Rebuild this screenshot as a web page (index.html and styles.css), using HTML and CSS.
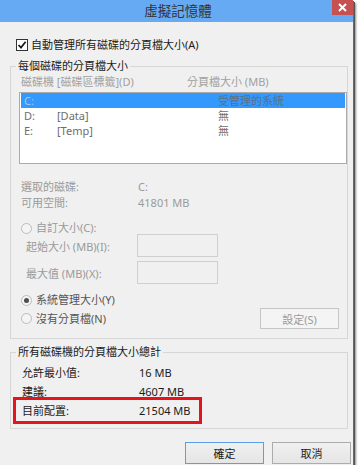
FILE: index.html
```html
<!DOCTYPE html>
<html lang="zh-Hant">
<head>
<meta charset="utf-8">
<title>虛擬記憶體</title>
<link rel="stylesheet" href="styles.css">
</head>
<body>
<div class="window">
  <div class="titlebar">
    <span class="spacer"></span>
    <span class="title">虛擬記憶體</span>
    <span class="close"><svg width="9" height="9" viewBox="0 0 9 9"><path d="M1 1 L8 8 M8 1 L1 8" stroke="#fff" stroke-width="2" fill="none"/></svg></span>
  </div>
  <div class="content">
    <div class="auto"><span class="checkbox"><svg width="10" height="10" viewBox="0 0 10 10"><path d="M1.5 5 L4 7.6 L8.6 1.8" stroke="#1a1a1a" stroke-width="1.7" fill="none"/></svg></span><span>自動管理所有磁碟的分頁檔大小(A)</span></div>

    <fieldset class="group g1">
      <legend>每個磁碟的分頁檔大小</legend>
      <div class="cols"><span>磁碟機 [磁碟區標籤](D)</span><span>分頁檔大小 (MB)</span></div>
      <div class="listbox">
        <div class="lrow selected"><span class="dl">C:</span><span></span><span>受管理的系統</span></div>
        <div class="lrow"><span>D:</span><span>[Data]</span><span>無</span></div>
        <div class="lrow"><span>E:</span><span>[Temp]</span><span>無</span></div>
      </div>
      <div class="info">
        <span>選取的磁碟:</span><span>C:</span>
        <span>可用空間:</span><span>41801 MB</span>
      </div>
      <div class="radio-row custom"><span class="radio"></span><span>自訂大小(C):</span></div>
      <div class="field-row"><span class="flabel">起始大小 (MB)(I):</span><span class="tbox"></span></div>
      <div class="field-row second"><span class="flabel">最大值 (MB)(X):</span><span class="tbox"></span></div>
      <div class="radio-row sys"><span class="radio checked"></span><span>系統管理大小(Y)</span></div>
      <div class="last-row">
        <div class="radio-row none"><span class="radio"></span><span>沒有分頁檔(N)</span></div>
        <span class="btn disabled">設定(S)</span>
      </div>
    </fieldset>

    <fieldset class="group g2">
      <legend>所有磁碟機的分頁檔大小總計</legend>
      <div class="trow"><span>允許最小值:</span><span>16 MB</span></div>
      <div class="trow"><span>建議:</span><span>4607 MB</span></div>
      <div class="trow current"><span>目前配置:</span><span>21504 MB</span></div>
    </fieldset>

    <div class="actions">
      <span class="btn default">確定</span>
      <span class="btn">取消</span>
    </div>
  </div>
</div>
</body>
</html>
```

FILE: styles.css
```css
body {
  margin: 0;
  background: #ffffff;
  font-family: "Noto Sans", "Noto Sans CJK TC", sans-serif;
  font-size: 11px;
  color: #1a1a1a;
}

.window {
  width: 353px;
  height: 465px;
  background: #f0f0f0;
  box-shadow: 1px 1px 0 #6a6a6a, 2px 2px 0 #555, 3px 3px 2px rgba(0, 0, 0, 0.45);
  display: flex;
  flex-direction: column;
}

.titlebar {
  height: 22px;
  background: #66aaf3;
  display: grid;
  grid-template-columns: 1fr auto 1fr;
}

.title {
  font-size: 13.5px;
  line-height: 22px;
  color: #333;
  padding-left: 3px;
}

.close {
  justify-self: end;
  width: 21px;
  height: 15px;
  background: #c75050;
  display: flex;
  align-items: center;
  justify-content: center;
}

.content {
  padding: 17px 5px 0 10px;
  display: flex;
  flex-direction: column;
}

.auto {
  display: flex;
  align-items: center;
  height: 12px;
  gap: 3px;
  margin-left: 6px;
  line-height: 12px;
}

.checkbox {
  width: 12px;
  height: 12px;
  box-sizing: border-box;
  border: 1px solid #333;
  background: #fff;
  display: flex;
  align-items: center;
  justify-content: center;
}

.group {
  margin: 0;
  padding: 0;
  border: 1px solid #d6d6d6;
  min-width: 0;
}

.group legend {
  margin-left: 5px;
  padding: 0 2px;
  height: 14px;
  line-height: 14px;
}

.g1 {
  margin-top: 8px;
  padding-bottom: 9px;
}

.cols {
  display: grid;
  grid-template-columns: 166px 1fr;
  padding-left: 10px;
  margin-top: 2px;
  height: 14px;
  line-height: 14px;
  color: #a0a0a0;
}

.listbox {
  margin: 3px 0 0 8px;
  height: 72px;
  box-sizing: border-box;
  border: 1px solid #ababab;
  background: #fff;
  padding: 0 1px;
}

.lrow {
  display: grid;
  grid-template-columns: 33px 161px 1fr;
  height: 15px;
  line-height: 15px;
  padding-left: 3px;
  color: #6d6d6d;
}

.lrow.selected {
  background: #3399ff;
  color: #5d6f84;
}

.lrow.selected .dl {
  color: #a9c6e6;
}

.info {
  display: grid;
  grid-template-columns: 117px 1fr;
  grid-auto-rows: 16px;
  line-height: 16px;
  padding-left: 10px;
  margin-top: 15px;
  color: #9a9a9a;
}

.radio-row {
  display: flex;
  align-items: center;
  gap: 4px;
  padding-left: 10px;
  height: 12px;
  line-height: 12px;
}

.radio {
  width: 11px;
  height: 11px;
  box-sizing: border-box;
  border: 1px solid #bcbcbc;
  border-radius: 50%;
  background: #f4f4f4;
  display: flex;
  align-items: center;
  justify-content: center;
}

.radio.checked::after {
  content: "";
  width: 5px;
  height: 5px;
  border-radius: 50%;
  background: #4d4d4d;
}

.custom {
  margin-top: 11px;
  color: #9a9a9a;
}

.field-row {
  display: flex;
  align-items: center;
  height: 23px;
  padding-left: 15px;
  color: #9a9a9a;
}

.field-row.second {
  margin-top: 4px;
}

.flabel {
  width: 111px;
}

.tbox {
  width: 81px;
  height: 23px;
  box-sizing: border-box;
  border: 1px solid #cfcfcf;
  background: #f0f0f0;
}

.sys {
  margin-top: 9px;
  height: 14px;
  color: #555;
}

.last-row {
  margin-top: 1px;
  height: 21px;
  display: flex;
  align-items: center;
  justify-content: space-between;
  padding-right: 8px;
}

.none {
  color: #555;
}

.btn {
  width: 79px;
  height: 22px;
  box-sizing: border-box;
  border: 1px solid #acacac;
  background: linear-gradient(#f0f0f0, #e5e5e5);
  display: flex;
  align-items: center;
  justify-content: center;
  color: #1a1a1a;
}

.btn.disabled {
  height: 21px;
  border-color: #c6c6c6;
  background: #f4f4f4;
  color: #9a9a9a;
}

.btn.default {
  border-color: #5a9ee6;
}

.g2 {
  margin-top: 6px;
  padding-top: 4px;
  padding-bottom: 4px;
}

.trow {
  display: grid;
  grid-template-columns: 117px 1fr;
  height: 19px;
  line-height: 19px;
  padding-left: 11px;
}

.trow.current {
  margin: -4px 0 0 2px;
  width: 189px;
  height: 27px;
  box-sizing: border-box;
  border: 3px solid #e5141c;
  padding-left: 6px;
  line-height: 21px;
}

.actions {
  display: flex;
  justify-content: flex-end;
  gap: 8px;
  margin-top: 13px;
  margin-right: -3px;
}
```
